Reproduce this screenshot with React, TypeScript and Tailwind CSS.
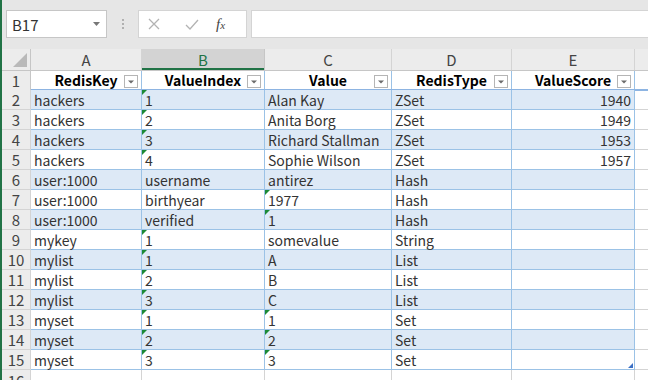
const rows: string[][] = [
  ['hackers', '1', 'Alan Kay', 'ZSet', '1940'],
  ['hackers', '2', 'Anita Borg', 'ZSet', '1949'],
  ['hackers', '3', 'Richard Stallman', 'ZSet', '1953'],
  ['hackers', '4', 'Sophie Wilson', 'ZSet', '1957'],
  ['user:1000', 'username', 'antirez', 'Hash', ''],
  ['user:1000', 'birthyear', '1977', 'Hash', ''],
  ['user:1000', 'verified', '1', 'Hash', ''],
  ['mykey', '1', 'somevalue', 'String', ''],
  ['mylist', '1', 'A', 'List', ''],
  ['mylist', '2', 'B', 'List', ''],
  ['mylist', '3', 'C', 'List', ''],
  ['myset', '1', '1', 'Set', ''],
  ['myset', '2', '2', 'Set', ''],
  ['myset', '3', '3', 'Set', ''],
];

const headers = ['RedisKey', 'ValueIndex', 'Value', 'RedisType', 'ValueScore'];
const widths = ['w-[111px]', 'w-[123px]', 'w-[127px]', 'w-[120px]', 'w-[123px]'];
const letters = ['A', 'B', 'C', 'D', 'E'];

const FilterButton = () => (
  <span className="absolute right-[3px] top-[4px] w-[14px] h-[13px] bg-white border border-[#b5b5b5] flex items-center justify-center">
    <svg width="6" height="4" viewBox="0 0 6 4">
      <path d="M0 0.5 L6 0.5 L3 3.5 Z" fill="#6b6b6b" />
    </svg>
  </span>
);

const Flag = () => (
  <span className="absolute left-0 top-0 w-0 h-0 border-t-[5px] border-r-[5px] border-t-[#1c8a36] border-r-transparent" />
);

const App = () => {
  return (
    <div
      className="w-[648px] h-[380px] overflow-hidden bg-[#e6e6e6] border-l-2 border-[#217346] text-[#333]"
      style={{ fontFamily: '"Noto Sans CJK JP", "Noto Sans", sans-serif' }}
    >
      {/* formula bar */}
      <div className="flex items-center h-[28px] mt-[10px] pl-[4px]">
        <div className="w-[101px] h-[28px] bg-white border border-[#c6c6c6] flex items-center justify-between pl-[5px] pr-[6px]">
          <span className="text-[15px] text-[#333] leading-none">B17</span>
          <svg width="7" height="4" viewBox="0 0 7 4">
            <path d="M0 0 L7 0 L3.5 4 Z" fill="#777" />
          </svg>
        </div>
        <div className="w-[31px] flex flex-col items-center gap-[2px]">
          <span className="w-[2px] h-[2px] bg-[#b0b0b0]" />
          <span className="w-[2px] h-[2px] bg-[#b0b0b0]" />
          <span className="w-[2px] h-[2px] bg-[#b0b0b0]" />
        </div>
        <div className="w-[109px] h-[28px] bg-white border border-[#d4d4d4] flex items-center pl-[9px] gap-[25px]">
          <svg width="12" height="12" viewBox="0 0 12 12">
            <path d="M1 1 L11 11 M11 1 L1 11" stroke="#b3b3b3" strokeWidth="1.3" />
          </svg>
          <svg width="14" height="11" viewBox="0 0 14 11">
            <path d="M1 6 L5 10 L13 1" stroke="#b3b3b3" strokeWidth="1.3" fill="none" />
          </svg>
          <span
            className="text-[15px] italic text-[#444] leading-none -ml-[8px]"
            style={{ fontFamily: '"Liberation Serif", serif' }}
          >
            f<span className="text-[11px]">x</span>
          </span>
        </div>
        <div className="flex-1 h-[28px] ml-[4px] bg-white border-y border-l border-[#d4d4d4]" />
      </div>

      {/* sheet */}
      <div className="mt-[11px] bg-white">
        {/* column headers */}
        <div className="flex h-[22px] bg-[#ececec] border-b border-[#c6c6c6]">
          <div className="w-[29px] border-r border-[#c6c6c6] relative overflow-hidden">
            <svg className="absolute right-[3px] bottom-[3px]" width="14" height="14" viewBox="0 0 14 14">
              <path d="M14 0 L14 14 L0 14 Z" fill="#b9b9b9" />
            </svg>
          </div>
          {letters.map((l, i) => (
            <div
              key={l}
              className={
                widths[i] +
                ' border-r flex items-center justify-center text-[15px] leading-none ' +
                (l === 'B'
                  ? 'bg-[#d3d3d3] text-[#217346] border-[#c6c6c6] shadow-[inset_0_-2px_0_#217346]'
                  : 'text-[#444] border-[#d4d4d4]')
              }
            >
              {l}
            </div>
          ))}
          <div className="flex-1" />
        </div>

        {/* header row 1 */}
        <div className="flex h-[20px] border-b-2 border-[#8db4e2]">
          <div className="w-[29px] bg-[#ececec] border-r border-[#c6c6c6] flex items-center justify-center text-[15px] text-[#444] leading-none -mb-[2px] border-b border-b-[#d4d4d4]">
            1
          </div>
          {headers.map((h, i) => (
            <div
              key={h}
              className={
                widths[i] +
                ' relative border-r border-[#9bc2e6] flex items-center justify-center whitespace-nowrap text-[14px] font-bold text-black leading-none'
              }
            >
              {h}
              <FilterButton />
            </div>
          ))}
          <div className="flex-1" />
        </div>

        {/* data rows */}
        {rows.map((r, ri) => (
          <div key={ri} className={'flex h-[20px] ' + (ri === 0 ? '-mt-[1px]' : '')}>
            <div className="w-[29px] bg-[#ececec] border-r border-b border-[#d4d4d4] flex items-center justify-center text-[15px] text-[#444] leading-none">
              {ri + 2}
            </div>
            {r.map((v, ci) => (
              <div
                key={ci}
                className={
                  widths[ci] +
                  ' relative border-r border-b border-[#9bc2e6] flex items-center pl-[3px] pr-[3px] pt-[1px] whitespace-nowrap text-[14px] leading-none ' +
                  (ri % 2 === 0 ? 'bg-[#dde9f6] ' : 'bg-white ') +
                  (ci === 4 ? 'justify-end' : '')
                }
              >
                {(ci === 1 || ci === 2) && /^\d+$/.test(v) && <Flag />}
                {v}
                {ri === rows.length - 1 && ci === 4 && (
                  <span className="absolute right-[1px] bottom-[1px] w-0 h-0 border-b-[5px] border-l-[5px] border-b-[#3a6fc4] border-l-transparent" />
                )}
              </div>
            ))}
            <div className="flex-1 border-b border-[#d4d4d4]" />
          </div>
        ))}

        {/* row 16 */}
        <div className="flex h-[20px]">
          <div className="w-[29px] bg-[#ececec] border-r border-[#d4d4d4] flex items-center justify-center text-[15px] text-[#444] leading-none">
            16
          </div>
          {widths.map((w, i) => (
            <div key={i} className={w + ' border-r border-[#d4d4d4]'} />
          ))}
        </div>
      </div>
    </div>
  );
};

export default App;
